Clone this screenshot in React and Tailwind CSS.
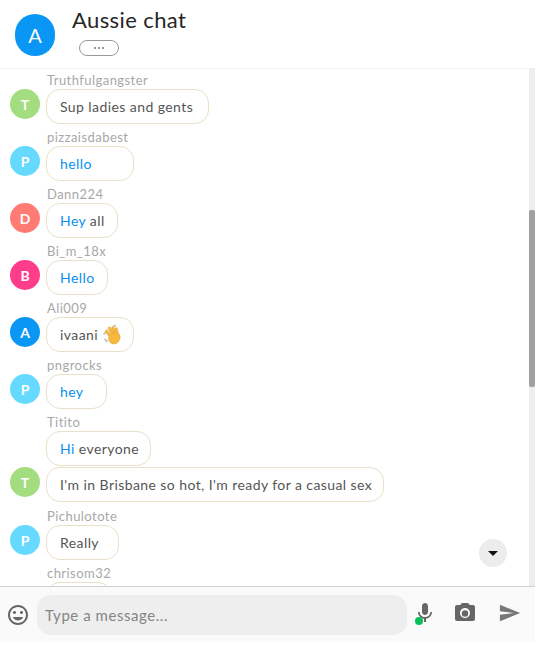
import { useState } from "react";

const messages = [
  { name: "Truthfulgangster", letter: "T", color: "bg-[#a3dd7f]", bubbles: [[{ text: "Sup ladies and gents" }]], w: ["w-[163px]"] },
  { name: "pizzaisdabest", letter: "P", color: "bg-[#66d9ff]", bubbles: [[{ text: "hello", blue: true }]], w: ["w-[88px]"] },
  { name: "Dann224", letter: "D", color: "bg-[#ff7b74]", bubbles: [[{ text: "Hey", blue: true }, { text: " all" }]], w: ["w-[72px]"] },
  { name: "Bi_m_18x", letter: "B", color: "bg-[#ff3d8b]", bubbles: [[{ text: "Hello", blue: true }]], w: ["w-[62px]"] },
  { name: "Ali009", letter: "A", color: "bg-[#0a96f5]", bubbles: [[{ text: "ivaani " }, { wave: true }]], w: ["w-[88px]"] },
  { name: "pngrocks", letter: "P", color: "bg-[#66d9ff]", bubbles: [[{ text: "hey", blue: true }]], w: ["w-[61px]"] },
  {
    name: "Titito",
    letter: "T",
    color: "bg-[#a3dd7f]",
    bubbles: [[{ text: "Hi", blue: true }, { text: " everyone" }], [{ text: "I'm in Brisbane so hot, I'm ready for a casual sex" }]],
    w: ["w-[105px]", "w-[338px]"],
  },
  { name: "Pichulotote", letter: "P", color: "bg-[#66d9ff]", bubbles: [[{ text: "Really" }]], w: ["w-[73px]"] },
  // coupé par le pied de page : seul le haut de la bulle se voit
  { name: "chrisom32", letter: "", color: "", bubbles: [[], []], w: ["w-[66px]", "w-[66px]"] },
];

// emoji main qui salue
const WaveIcon = () => (
  <svg viewBox="0 0 20 20" className="inline-block h-[20px] w-[20px] align-[-5px]">
    <path d="M1.5 9.5 L4 7 M2.5 14 L5.5 17 M11 1 L14 0.8" stroke="#b8b8b8" strokeWidth="1.5" fill="none" />
    <g fill="#f6b93b" stroke="#dc9a2e" strokeWidth="0.4">
      <rect x="7.6" y="1.4" width="2.6" height="9" rx="1.3" transform="rotate(-28 9 6)" />
      <rect x="10.6" y="1.4" width="2.6" height="9" rx="1.3" transform="rotate(-18 12 6)" />
      <rect x="13.4" y="2.6" width="2.6" height="9" rx="1.3" transform="rotate(-8 14.7 7)" />
      <rect x="4.6" y="4.4" width="2.6" height="8" rx="1.3" transform="rotate(-38 6 8)" />
      <path d="M7 10 L15 7.5 Q19 9 18 13.5 Q16.5 19 11.5 19 Q8.5 19 6.5 15 Z" />
    </g>
  </svg>
);

const Message = ({ msg }) => (
  <div className={`flex flex-col pl-[47px] ${msg.bubbles.length > 1 ? "mb-[1px]" : ""}`}>
    <div className="text-[13px] leading-[17px] tracking-[0.45px] text-[#a8a8a8]">{msg.name}</div>
    <div className="relative flex flex-col gap-[1px] pb-[5px]">
      {msg.bubbles.map((parts, i) => (
        <div
          key={i}
          className={`h-[35px] ${msg.w[i]} -ml-px flex items-center whitespace-nowrap rounded-[14px] border border-[#e8e0c8] bg-white pl-[13px] text-[14px] tracking-[0.42px] text-[#555555]`}
        >
          <span>
            {parts.map((p, j) =>
              p.wave ? <WaveIcon key={j} /> : <span key={j} className={p.blue ? "text-[#0a8ff0]" : ""}>{p.text}</span>
            )}
          </span>
        </div>
      ))}
      {msg.letter && (
        <div className={`absolute -left-[37px] bottom-[10px] flex h-[30px] w-[30px] items-center justify-center rounded-full text-[14px] font-bold text-white ${msg.color}`}>
          {msg.letter}
        </div>
      )}
    </div>
  </div>
);

const App = () => {
  const [draft, setDraft] = useState("");

  return (
    <div className="flex h-[646px] w-[535px] flex-col overflow-hidden bg-white font-['Lato','Liberation_Sans',sans-serif]">
      {/* Header */}
      <div className="flex h-[69px] shrink-0 items-start border-b border-[#f2f2f2] pl-[15px]">
        <div className="mt-[14px] flex h-[42px] w-[40px] items-center justify-center rounded-full bg-[#0a96f5] text-[20px] text-white">A</div>
        <div className="ml-[17px] flex flex-col items-start">
          <div className="mt-[5px] text-[22px] leading-[30px] tracking-[0.4px] text-[#262626]">Aussie chat</div>
          <button className="ml-[7px] mt-[5px] flex h-[16px] w-[40px] items-center justify-center rounded-full border border-[#9a9a9a] bg-white">
            <span className="flex gap-[2px]">
              <span className="h-[2px] w-[2px] rounded-full bg-[#777]" />
              <span className="h-[2px] w-[2px] rounded-full bg-[#777]" />
              <span className="h-[2px] w-[2px] rounded-full bg-[#777]" />
            </span>
          </button>
        </div>
      </div>

      {/* Messages */}
      <div className="relative flex h-[517px] shrink-0">
        <div className="flex-1 overflow-hidden pt-[3px]">
          {messages.map((m) => (
            <Message key={m.name} msg={m} />
          ))}
        </div>
        <div className="w-[6px] shrink-0 bg-[#eeeeee]">
          <div className="mt-[141px] h-[177px] w-full rounded-[2px] bg-[#a0a0a0]" />
        </div>
        <button className="absolute left-[479px] top-[470px] flex h-[28px] w-[28px] items-center justify-center rounded-full bg-[#ececec]">
          <span className="mt-[1px] h-0 w-0 border-x-[5px] border-t-[5px] border-x-transparent border-t-[#111]" />
        </button>
      </div>

      {/* Footer */}
      <div className="flex h-[56px] shrink-0 items-center border-t border-[#cfcfcf] bg-[#fafafa]">
        <svg viewBox="0 0 24 24" className="ml-[6px] h-[24px] w-[24px] shrink-0" fill="#666">
          <path d="M11.99 2C6.47 2 2 6.48 2 12s4.47 10 9.99 10C17.52 22 22 17.52 22 12S17.52 2 11.99 2zM12 20c-4.42 0-8-3.58-8-8s3.58-8 8-8 8 3.58 8 8-3.58 8-8 8zm3.5-9c.83 0 1.5-.67 1.5-1.5S16.33 8 15.5 8 14 8.67 14 9.5s.67 1.5 1.5 1.5zm-7 0c.83 0 1.5-.67 1.5-1.5S9.33 8 8.5 8 7 8.67 7 9.5 7.67 11 8.5 11zm3.5 6.5c2.33 0 4.31-1.46 5.11-3.5H6.89c.8 2.04 2.78 3.5 5.11 3.5z" />
        </svg>
        <input
          value={draft}
          onChange={(e) => setDraft(e.target.value)}
          placeholder="Type a message..."
          className="ml-[7px] h-[40px] w-[370px] shrink-0 rounded-[14px] bg-[#eeeeee] pl-[8px] text-[15px] leading-[20px] tracking-[0.55px] text-[#444] outline-none placeholder:text-[#858585]"
        />
        <div className="relative ml-[6px] h-[24px] w-[24px] shrink-0 -mt-[4px]">
          <svg viewBox="0 0 24 24" className="h-[24px] w-[24px]" fill="#666">
            <path d="M12 14c1.66 0 3-1.34 3-3V5c0-1.66-1.34-3-3-3S9 3.34 9 5v6c0 1.66 1.34 3 3 3zm5.3-3c0 3-2.54 5.1-5.3 5.1S6.7 14 6.7 11H5c0 3.41 2.72 6.23 6 6.72V21h2v-3.28c3.28-.48 6-3.3 6-6.72h-1.7z" />
          </svg>
          <span className="absolute left-[2px] top-[16px] h-[8px] w-[8px] rounded-full bg-[#0bbf5a]" />
        </div>
        <svg viewBox="0 0 24 24" className="ml-[16px] h-[24px] w-[24px] shrink-0 -mt-[3px]" fill="#666">
          <circle cx="12" cy="12.5" r="3.2" />
          <path d="M9 2 7.17 4H4c-1.1 0-2 .9-2 2v12c0 1.1.9 2 2 2h16c1.1 0 2-.9 2-2V6c0-1.1-.9-2-2-2h-3.17L15 2H9zm3 15c-2.76 0-5-2.24-5-5s2.24-5 5-5 5 2.24 5 5-2.24 5-5 5z" />
        </svg>
        <svg viewBox="0 0 24 24" className="ml-[22px] h-[22px] w-[22px] shrink-0 -mt-[3px]" fill="#777">
          <path d="M1 21 23 12 1 3v7l15 2-15 2z" />
        </svg>
      </div>
    </div>
  );
};

export default App;
